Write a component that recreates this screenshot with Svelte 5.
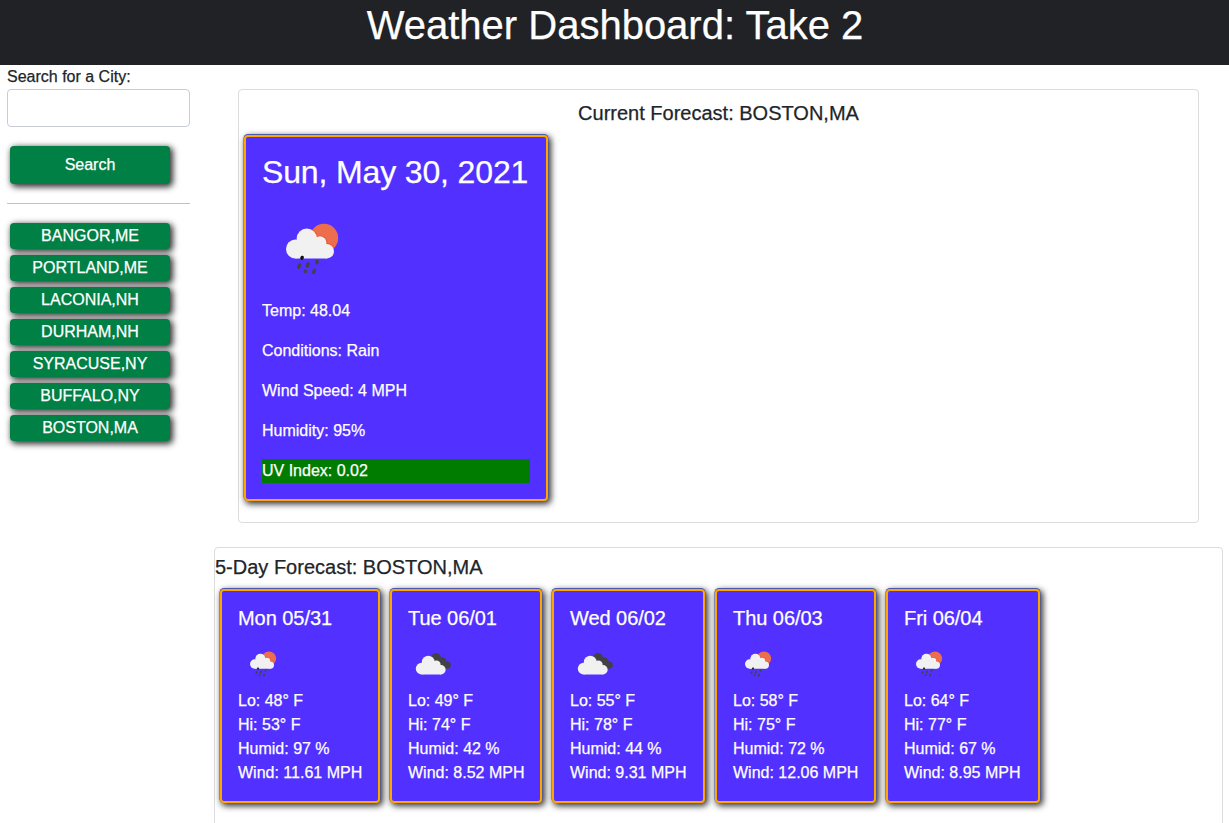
<script>
  const cities = ['BANGOR,ME', 'PORTLAND,ME', 'LACONIA,NH', 'DURHAM,NH', 'SYRACUSE,NY', 'BUFFALO,NY', 'BOSTON,MA'];
  const details = ['Temp: 48.04', 'Conditions: Rain', 'Wind Speed: 4 MPH', 'Humidity: 95%'];
  const days = [
    { date: 'Mon 05/31', icon: 'rain', lo: 48, hi: 53, humid: 97, wind: '11.61' },
    { date: 'Tue 06/01', icon: 'clouds', lo: 49, hi: 74, humid: 42, wind: '8.52' },
    { date: 'Wed 06/02', icon: 'clouds', lo: 55, hi: 78, humid: 44, wind: '9.31' },
    { date: 'Thu 06/03', icon: 'rain', lo: 58, hi: 75, humid: 72, wind: '12.06' },
    { date: 'Fri 06/04', icon: 'rain', lo: 64, hi: 77, humid: 67, wind: '8.95' }
  ];
  let query = $state('');
</script>

{#snippet weatherIcon(kind)}
  <svg class="icon" viewBox="0 0 100 100" aria-hidden="true">
    {#if kind === 'rain'}
      <clipPath id="sun"><circle cx="62" cy="39" r="14.2" /></clipPath>
      <circle cx="62" cy="39" r="14.2" fill="#ec6e4c" />
      <g fill="#f0502c" clip-path="url(#sun)">
        <circle cx="45" cy="39.6" r="10.8" />
        <circle cx="58.2" cy="43.6" r="7.2" />
        <circle cx="65" cy="52" r="7.9" />
      </g>
      <g fill="#f1f1f2">
        <circle cx="33.4" cy="50" r="9.4" />
        <circle cx="44.8" cy="39.7" r="10.2" />
        <circle cx="58" cy="43.8" r="6.5" />
        <circle cx="64.8" cy="52.2" r="7.2" />
        <path d="M33.4 59.4V45L50 39l12 6 3 14.4z" />
      </g>
      <g stroke="#424348" stroke-width="3.4" stroke-linecap="round">
        <path stroke="#111" d="M40.2 58.4l-.3.8" />
        <path d="M37.6 66l-1 2.2M46.2 64.8l-1 2.4M55.2 62.6l-.4 1.2M43.4 72l-.2.5M52.4 71.3l-.9 2.2" />
      </g>
    {:else}
      <g fill="#424144">
        <circle cx="56" cy="37.8" r="9.8" />
        <circle cx="69" cy="44" r="7" />
        <circle cx="78.5" cy="52" r="7.2" />
        <path d="M56 37l13 0 9.5 8v14.2H64z" />
      </g>
      <g fill="#f1f1f2">
        <circle cx="27.2" cy="59.2" r="11.6" />
        <circle cx="40.5" cy="46.3" r="12.8" />
        <circle cx="57" cy="51.5" r="8.3" />
        <circle cx="66" cy="61.5" r="9.3" />
        <path d="M27.2 70.8V53L47 46l16 7 3 17.8z" />
      </g>
    {/if}
  </svg>
{/snippet}

<header><h1>Weather Dashboard: Take 2</h1></header>
<div class="layout">
  <aside>
    <label for="city">Search for a City:</label>
    <input id="city" bind:value={query} />
    <button class="search">Search</button>
    <hr />
    <div class="cities">
      {#each cities as city}<button>{city}</button>{/each}
    </div>
  </aside>
  <main>
    <section class="current">
      <h2>Current Forecast: BOSTON,MA</h2>
      <article class="card today">
        <h3>Sun, May 30, 2021</h3>
        {@render weatherIcon('rain')}
        {#each details as line}<p>{line}</p>{/each}
        <p class="uv">UV Index: 0.02</p>
      </article>
    </section>
    <section class="week">
      <h2>5-Day Forecast: BOSTON,MA</h2>
      <div class="days">
        {#each days as day}
          <article class="card">
            <h4>{day.date}</h4>
            {@render weatherIcon(day.icon)}
            <p>Lo: {day.lo}° F</p>
            <p>Hi: {day.hi}° F</p>
            <p>Humid: {day.humid} %</p>
            <p>Wind: {day.wind} MPH</p>
          </article>
        {/each}
      </div>
    </section>
  </main>
</div>

<style>
  :global(body) {
    margin: 0;
    overflow: hidden;
    background: #fff;
    color: #212529;
    font: 16px/24px "Liberation Sans", Arial, sans-serif;
    -webkit-text-stroke: .25px currentColor;
  }
  :global(#app) { height: 823px; overflow: hidden; }
  * { box-sizing: border-box; }
  h1, h2, h3, h4, p { margin: 0; font-weight: 400; }
  header { height: 65px; background: #202226; color: #fff; text-align: center; }
  h1 { font-size: 40px; line-height: 50px; padding-left: 1px; }
  .layout { display: flex; }
  aside { width: 190px; padding-left: 7px; flex: none; }
  label { display: block; height: 24px; }
  input {
    display: block;
    width: 183px;
    height: 38px;
    padding: 6px 12px;
    border: 1px solid #c8ccd6;
    border-radius: 4px;
    font: inherit;
  }
  button {
    display: block;
    width: 160px;
    height: 26px;
    padding: 0;
    border: 0;
    border-radius: 4px;
    background: #008045;
    color: #fff;
    font: inherit;
    line-height: 24px;
    box-shadow: 2px 2px 6px 1px #333;
  }
  .search { height: 38px; margin: 19px 0 19px 3px; padding-bottom: 2px; line-height: 24px; padding-bottom: 1px; }
  hr { margin: 0; border: 0; height: 1px; background: #c2c3c5; }
  .cities { display: grid; gap: 6px; margin: 19px 0 0 3px; }
  main { flex: 1; padding: 24px 6px 0 24px; }
  section { border: 1px solid #dcdcdd; border-radius: 4px; }
  h2 { font-size: 20px; line-height: 24px; }
  .current { height: 434px; margin: 0 24px; padding: 11px 0 0 5px; }
  .current h2 { margin: 0 5px 10px 0; text-align: center; }
  .week { height: 290px; margin-top: 24px; padding-top: 7px; }
  .days {
    display: grid;
    grid-template-columns: 160px 152px 153px 161px 154px;
    gap: 10px;
    margin: 10px 0 0 5px;
  }
  .card {
    padding: 16px;
    border: 2px solid orange;
    border-radius: 4px;
    background: #5230ff;
    color: #fff;
    white-space: nowrap;
    box-shadow: 0 -.5px 0 .5px #4a58b0, 2px 2px 6px 1px #333;
  }
  h4 { margin: -1px 0 9px; font-size: 20px; line-height: 24px; letter-spacing: -.05px; }
  .icon { display: block; width: 50px; height: 50px; }
  .today { width: 304px; height: 366px; }
  .today h3 { margin-bottom: 8px; font-size: 32px; line-height: 38px; letter-spacing: -.14px; }
  .today .icon { width: 100px; height: 100px; }
  .today p { margin-bottom: 16px; }
  .today .uv { margin: 0; background: #007d00; }
</style>
